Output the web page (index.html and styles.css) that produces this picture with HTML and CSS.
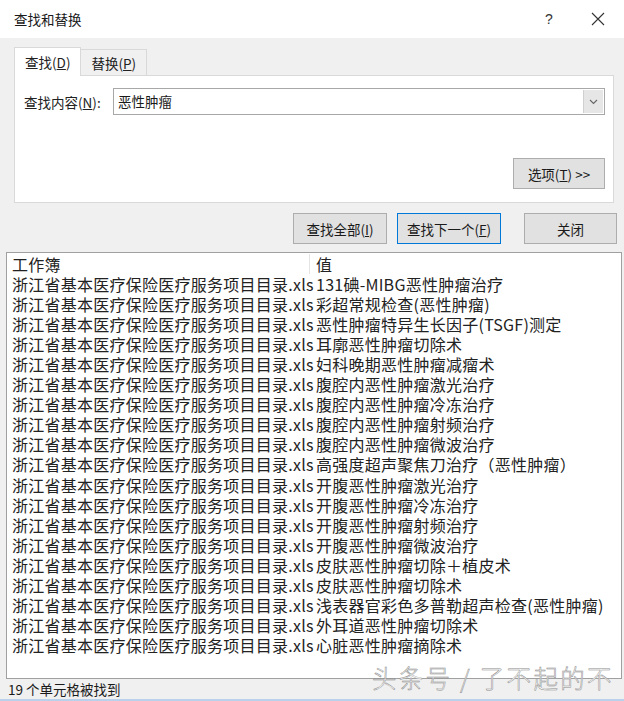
FILE: index.html
```html
<!DOCTYPE html>
<html lang="zh-CN">
<head>
<meta charset="utf-8">
<title>查找和替换</title>
<link rel="stylesheet" href="styles.css">
</head>
<body>
<div class="dialog">
  <div class="titlebar">
    <span class="title">查找和替换</span>
    <span class="help">?</span>
    <span class="close">
      <svg width="14" height="14" viewBox="0 0 14 14"><path d="M1 1L13 13M13 1L1 13" stroke="#333" stroke-width="1.1" fill="none"/></svg>
    </span>
  </div>
  <div class="body">
    <div class="tabs">
      <div class="tab active">查找(<u>D</u>)</div>
      <div class="tab">替换(<u>P</u>)</div>
    </div>
    <div class="panel">
      <div class="field">
        <span class="label">查找内容(<u>N</u>):</span>
        <div class="combo">
          <span class="combo-text">恶性肿瘤</span>
          <span class="combo-btn">
            <svg width="9" height="6" viewBox="0 0 9 6"><path d="M1 1L4.5 4.5L8 1" stroke="#666" stroke-width="1.1" fill="none"/></svg>
          </span>
        </div>
      </div>
      <div class="options-row">
        <button class="btn options">选项(<u>T</u>) &gt;&gt;</button>
      </div>
    </div>
    <div class="actions">
      <button class="btn find-all">查找全部(<u>I</u>)</button>
      <button class="btn find-next">查找下一个(<u>F</u>)</button>
      <button class="btn close-btn">关闭</button>
    </div>
    <div class="results">
      <div class="row head">
        <span class="c1">工作簿</span><span class="c2">值</span>
      </div>
      <div class="row"><span class="c1">浙江省基本医疗保险医疗服务项目目录.xls</span><span class="c2">131碘-MIBG恶性肿瘤治疗</span></div>
      <div class="row"><span class="c1">浙江省基本医疗保险医疗服务项目目录.xls</span><span class="c2">彩超常规检查(恶性肿瘤)</span></div>
      <div class="row"><span class="c1">浙江省基本医疗保险医疗服务项目目录.xls</span><span class="c2">恶性肿瘤特异生长因子(TSGF)测定</span></div>
      <div class="row"><span class="c1">浙江省基本医疗保险医疗服务项目目录.xls</span><span class="c2">耳廓恶性肿瘤切除术</span></div>
      <div class="row"><span class="c1">浙江省基本医疗保险医疗服务项目目录.xls</span><span class="c2">妇科晚期恶性肿瘤减瘤术</span></div>
      <div class="row"><span class="c1">浙江省基本医疗保险医疗服务项目目录.xls</span><span class="c2">腹腔内恶性肿瘤激光治疗</span></div>
      <div class="row"><span class="c1">浙江省基本医疗保险医疗服务项目目录.xls</span><span class="c2">腹腔内恶性肿瘤冷冻治疗</span></div>
      <div class="row"><span class="c1">浙江省基本医疗保险医疗服务项目目录.xls</span><span class="c2">腹腔内恶性肿瘤射频治疗</span></div>
      <div class="row"><span class="c1">浙江省基本医疗保险医疗服务项目目录.xls</span><span class="c2">腹腔内恶性肿瘤微波治疗</span></div>
      <div class="row"><span class="c1">浙江省基本医疗保险医疗服务项目目录.xls</span><span class="c2">高强度超声聚焦刀治疗（恶性肿瘤）</span></div>
      <div class="row"><span class="c1">浙江省基本医疗保险医疗服务项目目录.xls</span><span class="c2">开腹恶性肿瘤激光治疗</span></div>
      <div class="row"><span class="c1">浙江省基本医疗保险医疗服务项目目录.xls</span><span class="c2">开腹恶性肿瘤冷冻治疗</span></div>
      <div class="row"><span class="c1">浙江省基本医疗保险医疗服务项目目录.xls</span><span class="c2">开腹恶性肿瘤射频治疗</span></div>
      <div class="row"><span class="c1">浙江省基本医疗保险医疗服务项目目录.xls</span><span class="c2">开腹恶性肿瘤微波治疗</span></div>
      <div class="row"><span class="c1">浙江省基本医疗保险医疗服务项目目录.xls</span><span class="c2">皮肤恶性肿瘤切除＋植皮术</span></div>
      <div class="row"><span class="c1">浙江省基本医疗保险医疗服务项目目录.xls</span><span class="c2">皮肤恶性肿瘤切除术</span></div>
      <div class="row"><span class="c1">浙江省基本医疗保险医疗服务项目目录.xls</span><span class="c2">浅表器官彩色多普勒超声检查(恶性肿瘤)</span></div>
      <div class="row"><span class="c1">浙江省基本医疗保险医疗服务项目目录.xls</span><span class="c2">外耳道恶性肿瘤切除术</span></div>
      <div class="row"><span class="c1">浙江省基本医疗保险医疗服务项目目录.xls</span><span class="c2">心脏恶性肿瘤摘除术</span></div>
    </div>
    <div class="status">19 个单元格被找到</div>
  </div>
  <div class="watermark">头条号 / 了不起的不</div>
</div>
</body>
</html>
```
FILE: styles.css
```css
* { box-sizing: border-box; }
html, body {
  margin: 0;
  padding: 0;
}
body {
  width: 624px;
  height: 701px;
  overflow: hidden;
  background: #f0f0f0;
  font-family: "Noto Sans CJK SC", "Noto Sans", sans-serif;
  color: #1a1a1a;
}
.dialog {
  position: relative;
  width: 624px;
  height: 701px;
  display: flex;
  flex-direction: column;
}
.titlebar {
  height: 38px;
  background: #fff;
  display: flex;
  align-items: center;
  padding-left: 14px;
  font-size: 13.5px;
  flex-shrink: 0;
}
.title { flex: 1; }
.help {
  width: 20px;
  text-align: center;
  margin-right: 32px;
  font-family: "Liberation Sans", sans-serif;
  font-size: 14px;
  color: #333;
}
.close {
  width: 14px;
  height: 14px;
  margin-right: 19px;
  display: flex;
}
.body {
  flex: 1;
  display: flex;
  flex-direction: column;
  font-size: 13.5px;
}
.tabs {
  display: flex;
  align-items: flex-end;
  margin: 9px 0 0 14px;
  height: 28px;
}
.tab {
  height: 26px;
  padding: 0 10px;
  display: flex;
  align-items: center;
  border: 1px solid #d9d9d9;
  border-bottom: none;
  background: #f0f0f0;
  color: #222;
}
.tab.active {
  height: 29px;
  background: #fff;
  border-color: #d9d9d9;
  margin-bottom: -1px;
  position: relative;
  z-index: 1;
}
.tab + .tab { border-left: none; }
.panel {
  margin: 0 10px 0 14px;
  height: 128px;
  background: #fff;
  border: 1px solid #d9d9d9;
  display: flex;
  flex-direction: column;
  padding: 12px 8px 13px 9px;
}
.field {
  display: flex;
  align-items: center;
  height: 27px;
}
.label {
  width: 89px;
  color: #222;
}
.combo {
  flex: 1;
  height: 27px;
  border: 1px solid #a8a8a8;
  display: flex;
  align-items: stretch;
  background: #fff;
}
.combo-text {
  flex: 1;
  padding-left: 4px;
  display: flex;
  align-items: center;
  padding-bottom: 2px;
}
.combo-btn {
  width: 20px;
  margin: 1px;
  background: #e6e6e6;
  border-left: 1px solid #d0d0d0;
  display: flex;
  align-items: center;
  justify-content: center;
}
.options-row {
  flex: 1;
  display: flex;
  align-items: flex-end;
  justify-content: flex-end;
}
.btn {
  font: inherit;
  font-size: 13.5px;
  color: #1a1a1a;
  background: #e1e1e1;
  border: 1px solid #adadad;
  height: 31px;
  padding: 0;
  display: flex;
  align-items: center;
  justify-content: center;
}
.options { width: 92px; }
.actions {
  display: flex;
  justify-content: flex-end;
  margin-top: 10px;
  padding-right: 7px;
  height: 31px;
}
.find-all { width: 94px; margin-right: 10px; }
.find-next { width: 104px; margin-right: 23px; border: 1px solid #0078d7; }
.close-btn { width: 93px; }
.results {
  margin: 8px 2px 0 6px;
  height: 427px;
  background: #fff;
  border: 1px solid #a0a0a0;
  padding: 1px 0 0 5px;
  font-size: 16px;
  letter-spacing: 0.25px;
  color: #222;
  overflow: hidden;
}
.row {
  display: flex;
  height: 20.05px;
  line-height: 20px;
  white-space: nowrap;
}
.c1 { width: 304px; flex-shrink: 0; }
.c2 { padding-left: 0; }
.row.head .c1 { width: 298px; margin-right: 6px; border-right: 1px solid #e4e4e4; }
.status {
  height: 22px;
  display: flex;
  align-items: center;
  padding-left: 8px;
  font-size: 13.5px;
  border-bottom: 2px solid #b9d1ea;
}
.watermark {
  position: absolute;
  left: 372px;
  top: 660px;
  font-size: 24.5px;
  font-weight: 300;
  color: #fff;
  letter-spacing: 2.3px;
  -webkit-text-stroke: 0.5px #8a8a8a;
  white-space: nowrap;
}
```
